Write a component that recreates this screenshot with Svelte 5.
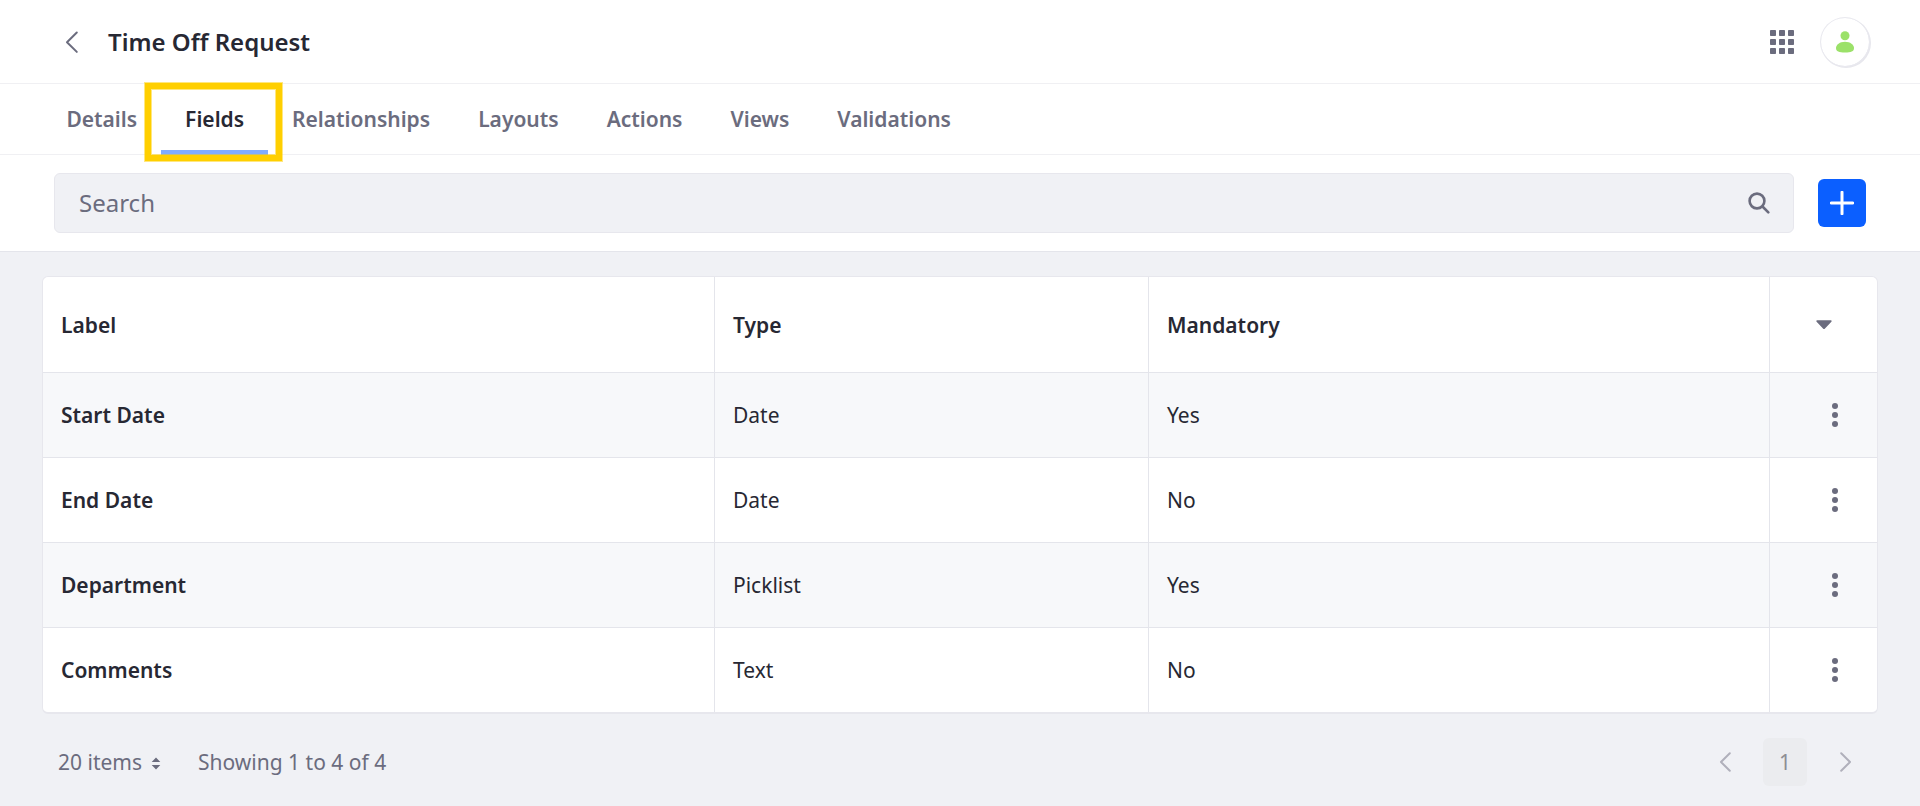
<script>
  const tabs = ['Details', 'Fields', 'Relationships', 'Layouts', 'Actions', 'Views', 'Validations'];
  const active = 'Fields';
  const rows = [
    { label: 'Start Date', type: 'Date', mandatory: 'Yes' },
    { label: 'End Date', type: 'Date', mandatory: 'No' },
    { label: 'Department', type: 'Picklist', mandatory: 'Yes' },
    { label: 'Comments', type: 'Text', mandatory: 'No' }
  ];
  const grid = [0, 9, 18];
</script>

<div class="page">
  <header class="header">
    <svg class="back" width="24" height="24" viewBox="0 0 24 24"><path d="M16.8 2.500 7 12.200l9.800 9.700" /></svg>
    <h1>Time Off Request</h1>
    <div class="tools">
      <svg class="apps" width="24" height="24" viewBox="0 0 24 24">
        {#each grid as y}
          {#each grid as x}
            <rect {x} {y} width="6" height="6" rx="0.8" />
          {/each}
        {/each}
      </svg>
      <div class="avatar">
        <svg width="18" height="22" viewBox="0 0 18 22">
          <circle cx="9" cy="4.7" r="4.5" />
          <path d="M9 10.7c5.200 0 9 3 9 6.300 0 3.500-3 4.500-9 4.500s-9-1-9-4.500c0-3.300 3.800-6.300 9-6.300z" />
        </svg>
      </div>
    </div>
  </header>

  <nav class="tabs">
    {#each tabs as tab}
      <div class="tab" class:active={tab === active}><span>{tab}</span></div>
    {/each}
  </nav>

  <div class="toolbar">
    <div class="search">
      <span>Search</span>
      <svg width="22" height="22" viewBox="0 0 22 22">
        <circle cx="9" cy="9" r="7.400" />
        <path d="M14.500 14.500 20.300 20.300" />
      </svg>
    </div>
    <button class="add" aria-label="Add">
      <svg width="24" height="24" viewBox="0 0 24 24"><path d="M12 1.200v21.600M1.200 12h21.600" /></svg>
    </button>
  </div>

  <main>
    <div class="table">
      <div class="row head">
        <div class="cell">Label</div>
        <div class="cell">Type</div>
        <div class="cell">Mandatory</div>
        <div class="cell menu">
          <svg class="caret" width="16" height="10" viewBox="0 0 16 10"><path d="M1.200.300h13.600c1 0 1.100.900.600 1.500L9 8.500c-.600.700-1.400.700-2 0L.600 1.800C.100 1.200.200.300 1.200.300z" /></svg>
        </div>
      </div>
      {#each rows as row}
        <div class="row">
          <div class="cell strong">{row.label}</div>
          <div class="cell">{row.type}</div>
          <div class="cell">{row.mandatory}</div>
          <div class="cell menu">
            <svg class="dots" width="6" height="24" viewBox="0 0 6 24">
              <circle cx="3" cy="3" r="3" /><circle cx="3" cy="12" r="3" /><circle cx="3" cy="21" r="3" />
            </svg>
          </div>
        </div>
      {/each}
    </div>

    <footer>
      <span class="count">20 items</span>
      <svg class="sort" width="10" height="13" viewBox="0 0 10 13">
        <path d="M5 .400 9.300 5H.700zM5 12.600 9.300 8H.700z" />
      </svg>
      <span class="showing">Showing 1 to 4 of 4</span>
      <div class="pager">
        <svg width="12" height="20" viewBox="0 0 12 20"><path d="M10.800 1.200 2 10l8.800 8.800" /></svg>
        <span class="current">1</span>
        <svg width="12" height="20" viewBox="0 0 12 20"><path d="M1.200 1.200 10 10l-8.800 8.800" /></svg>
      </div>
    </footer>
  </main>
</div>

<style>
  :global(body) {
    background: #f0f1f5;
  }
  .page {
    box-sizing: border-box;
    width: 1920px;
    height: 806px;
    overflow: hidden;
    background: #f0f1f5;
    color: #272833;
    font-family: 'Noto Sans', sans-serif;
    font-size: 21px;
    line-height: 32px;
  }
  .page * {
    box-sizing: border-box;
  }
  svg {
    display: block;
    flex: none;
  }
  .header {
    display: flex;
    align-items: center;
    height: 84px;
    padding: 0 50px 0 60px;
    background: #fff;
    border-bottom: 1px solid #f0f0f3;
  }
  .back path {
    fill: none;
    stroke: #6b6c7e;
    stroke-width: 2;
    stroke-linecap: round;
    stroke-linejoin: round;
  }
  h1 {
    margin: 1px 0 0 24px;
    font-size: 24px;
    font-weight: 600;
    line-height: 36px;
  }
  .tools {
    display: flex;
    align-items: center;
    gap: 27px;
    margin-left: auto;
  }
  .apps {
    fill: #6b6c7e;
  }
  .avatar {
    display: flex;
    align-items: center;
    justify-content: center;
    width: 48px;
    height: 48px;
    margin: 1px 1px 0 0;
    border-radius: 50%;
    box-shadow: 0 0 0 1px #e9e9ef, 1px 1px 0 1px #e7e7ed;
  }
  .avatar svg {
    fill: #9be169;
  }
  .tabs {
    display: flex;
    height: 71px;
    padding-left: 42.4px;
    background: #fff;
    border-bottom: 1px solid #f0f0f3;
  }
  .tab {
    position: relative;
    display: flex;
    align-items: center;
    height: 70px;
    padding: 0 24px;
    color: #6b6c7e;
    font-weight: 600;
  }
  .active {
    color: #272833;
  }
  .active::before {
    content: '';
    position: absolute;
    left: 0;
    right: 0;
    top: 66px;
    height: 5px;
    background: #80acff;
  }
  .active::after {
    content: '';
    box-sizing: border-box;
    position: absolute;
    left: -16px;
    right: -14px;
    top: -1px;
    height: 78px;
    border: 6px solid #ffcf00;
    box-shadow: 0 0 0 1px #ffcf0080, inset 0 0 0 1px #ffcf0080;
  }
  .toolbar {
    display: flex;
    align-items: center;
    gap: 24px;
    height: 97px;
    padding: 0 54px;
    background: #fff;
    border-bottom: 1px solid #e4e5eb;
  }
  .search {
    display: flex;
    align-items: center;
    justify-content: space-between;
    flex: 1;
    height: 60px;
    padding: 0 24px;
    border: 1px solid #e7e7ed;
    border-radius: 6px;
    background: #f0f1f5;
    color: #6b6c7e;
    font-size: 24px;
  }
  .search svg {
    margin: -1px -1px 0 0;
  }
  .search path,
  .search circle {
    fill: none;
    stroke: #6b6c7e;
    stroke-width: 2.600;
    stroke-linecap: round;
  }
  .add {
    display: flex;
    align-items: center;
    justify-content: center;
    width: 48px;
    height: 48px;
    padding: 0;
    border: 0;
    border-radius: 6px;
    background: #0b5fff;
  }
  .add path {
    stroke: #fff;
    stroke-width: 3;
    stroke-linecap: round;
  }
  main {
    padding: 24px 42px 0;
  }
  .table {
    width: 1836px;
    overflow: hidden;
    border: 1px solid #e7e7ed;
    border-bottom-width: 2px;
    border-radius: 6px;
    background: #fff;
  }
  .row {
    display: grid;
    grid-template-columns: 671px 434px 621px 108px;
    height: 85px;
    border-bottom: 1px solid #e4e5eb;
  }
  .row:nth-child(even) {
    background: #f7f8fa;
  }
  .row:last-child {
    height: 84px;
    border-bottom: 0;
  }
  .head {
    height: 96px;
    font-weight: 600;
  }
  .cell {
    display: flex;
    align-items: center;
    padding-left: 18px;
  }
  .cell + .cell {
    border-left: 1px solid #e4e5eb;
  }
  .strong {
    font-weight: 600;
  }
  .cell.menu {
    padding: 0;
  }
  .caret {
    margin-left: 46px;
    fill: #6b6c7e;
  }
  .dots {
    margin-left: 62px;
    fill: #6b6c7e;
  }
  footer {
    display: flex;
    align-items: center;
    height: 48px;
    margin-top: 24px;
    padding: 0 26px 0 16px;
    color: #6b6c7e;
  }
  .sort {
    margin: 3px 37px 0 9px;
    fill: #6b6c7e;
  }
  .pager {
    display: flex;
    align-items: center;
    gap: 32px;
    margin-left: auto;
  }
  .pager path {
    fill: none;
    stroke: #b0b0bb;
    stroke-width: 2;
    stroke-linecap: round;
    stroke-linejoin: round;
  }
  .current {
    width: 44px;
    height: 48px;
    margin-right: 1px;
    border-radius: 6px;
    background: #ebecef;
    color: #8d8e94;
    line-height: 48px;
    text-align: center;
  }
</style>
